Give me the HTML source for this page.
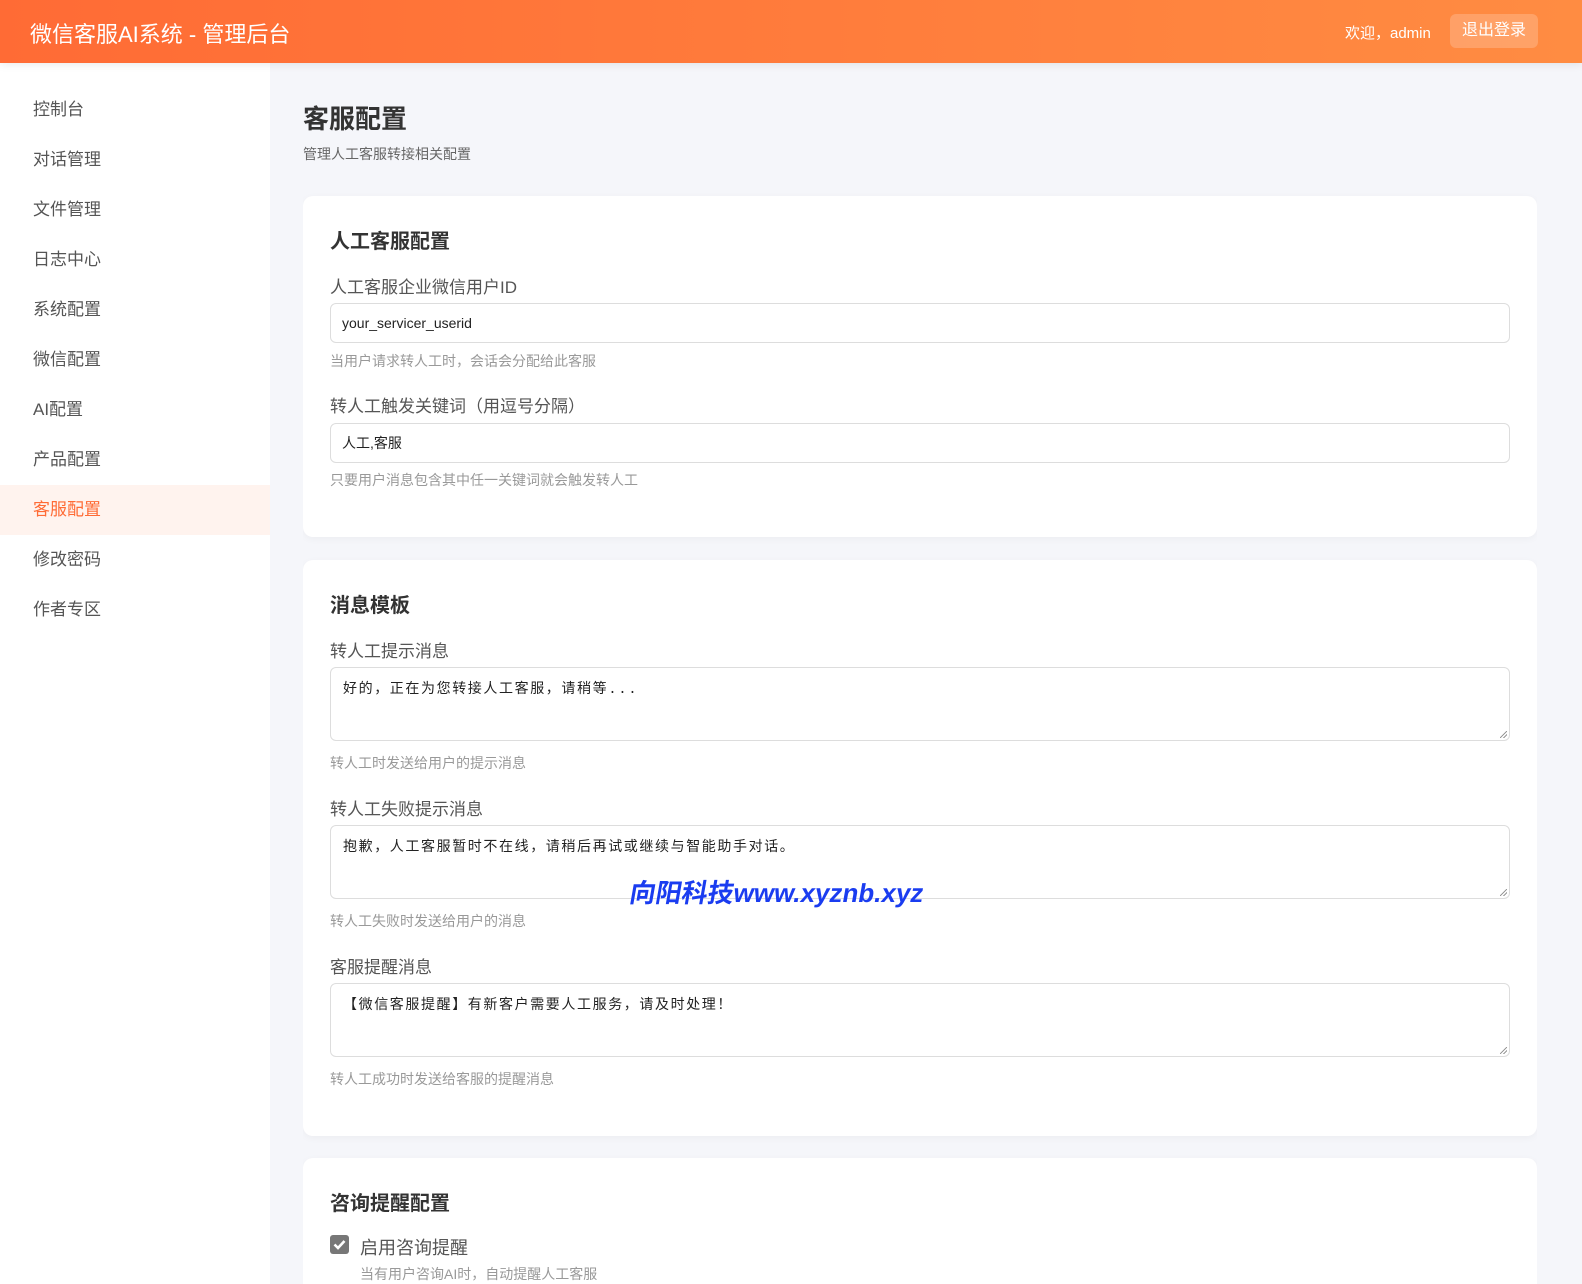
<!DOCTYPE html>
<html><head><meta charset="utf-8"><style>
*{box-sizing:border-box;margin:0;padding:0}
html{width:1582px;height:1284px;overflow:hidden}
body{width:1582px;height:1284px;overflow:hidden;position:relative;background:#f5f6fa;font-family:"Liberation Sans","Noto Sans CJK SC",sans-serif;color:#333}
.hd{position:absolute;left:0;top:0;width:1582px;height:63px;background:linear-gradient(90deg,#ff6b35,#ff8c42);box-shadow:0 2px 8px rgba(0,0,0,.08);z-index:2}
.hd h1{position:absolute;left:30px;top:17px;font-size:22px;font-weight:normal;color:#fff}
.hd .w{position:absolute;left:1345px;top:22px;font-size:15px;color:#fff}
.hd .b{position:absolute;left:1450px;top:14px;width:88px;height:34px;border-radius:6px;background:rgba(255,255,255,.2);color:#fff;font-size:16px;text-align:center;line-height:34px}
.sb{position:absolute;left:0;top:63px;width:270px;height:1221px;background:#fff}
.sb div{height:50px;line-height:50px;padding-left:33px;font-size:17px;color:#555}
.sb .a{background:#fff3ee;color:#ff6b35}
.mn{position:absolute;left:303px;top:63px;width:1234px;height:1221px;overflow:hidden}
.pt{position:absolute;top:36px;font-size:26px;font-weight:bold;color:#333}
.ps{position:absolute;top:81px;font-size:14px;color:#666}
.cd{position:absolute;left:0;width:1234px;background:#fff;border-radius:10px;box-shadow:0 2px 8px rgba(0,0,0,.04);padding:0 27px;overflow:hidden}
.ct{position:absolute;left:27px;font-size:20px;font-weight:bold;color:#333}
.lb{position:absolute;left:27px;font-size:17px;color:#555}
.in{position:absolute;left:27px;width:1180px;height:40px;border:1px solid #ddd;border-radius:6px;padding:0 11px;line-height:38px;font-size:14px;color:#222}
.ta{position:absolute;left:27px;width:1180px;height:74px;border:1px solid #ddd;border-radius:6px;padding:10px 12px;font-size:14px;letter-spacing:1.6px;color:#222;font-family:"Liberation Mono","Noto Sans CJK SC",monospace}
.ta:after{content:"";position:absolute;right:2px;bottom:2px;width:7px;height:7px;background:linear-gradient(135deg,transparent 45%,#999 45%,#999 55%,transparent 55%,transparent 70%,#999 70%,#999 80%,transparent 80%)}
.hp{position:absolute;left:27px;font-size:14px;color:#999}
.wm{position:absolute;left:627px;top:873px;font-size:26px;font-weight:bold;color:#1a3cf0;z-index:3;transform:skewX(-10deg);transform-origin:left bottom}
.ck{position:absolute;left:27px;width:19px;height:19px;background:#777;border-radius:3px}
</style></head><body>
<div class="hd"><h1>微信客服AI系统 - 管理后台</h1><span class="w">欢迎，admin</span><span class="b">退出登录</span></div>
<div class="sb" style="padding-top:22px">
<div>控制台</div><div>对话管理</div><div>文件管理</div><div>日志中心</div><div>系统配置</div><div>微信配置</div><div>AI配置</div><div>产品配置</div><div class="a">客服配置</div><div>修改密码</div><div>作者专区</div>
</div>
<div class="mn">
<div class="pt">客服配置</div>
<div class="ps">管理人工客服转接相关配置</div>
<div class="cd" style="top:133px;height:341px">
<div class="ct" style="top:29px">人工客服配置</div>
<div class="lb" style="top:77px">人工客服企业微信用户ID</div>
<div class="in" style="top:107px">your_servicer_userid</div>
<div class="hp" style="top:155px">当用户请求转人工时，会话会分配给此客服</div>
<div class="lb" style="top:196px">转人工触发关键词（用逗号分隔）</div>
<div class="in" style="top:227px">人工,客服</div>
<div class="hp" style="top:274px">只要用户消息包含其中任一关键词就会触发转人工</div>
</div>
<div class="cd" style="top:497px;height:576px">
<div class="ct" style="top:29px">消息模板</div>
<div class="lb" style="top:77px">转人工提示消息</div>
<div class="ta" style="top:107px">好的，正在为您转接人工客服，请稍等...</div>
<div class="hp" style="top:193px">转人工时发送给用户的提示消息</div>
<div class="lb" style="top:235px">转人工失败提示消息</div>
<div class="ta" style="top:265px">抱歉，人工客服暂时不在线，请稍后再试或继续与智能助手对话。</div>
<div class="hp" style="top:351px">转人工失败时发送给用户的消息</div>
<div class="lb" style="top:393px">客服提醒消息</div>
<div class="ta" style="top:423px">【微信客服提醒】有新客户需要人工服务，请及时处理！</div>
<div class="hp" style="top:509px">转人工成功时发送给客服的提醒消息</div>
</div>
<div class="cd" style="top:1095px;height:126px;border-radius:10px 10px 0 0">
<div class="ct" style="top:29px">咨询提醒配置</div>
<div class="ck" style="top:77px"><svg width="19" height="19" viewBox="0 0 19 19"><path d="M4.5 9.5l3.5 3.5 6.5-7" stroke="#fff" stroke-width="2.6" fill="none"/></svg></div>
<div class="lb" style="top:76px;left:57px;font-size:18px">启用咨询提醒</div>
<div class="hp" style="top:106px;left:57px">当有用户咨询AI时，自动提醒人工客服</div>
</div>
</div>
<div class="wm">向阳科技www.xyznb.xyz</div>
</body></html>
